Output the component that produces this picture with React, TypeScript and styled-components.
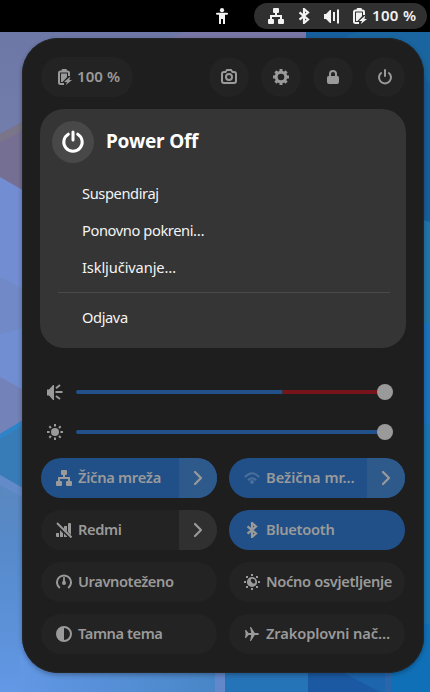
import React from 'react';
import styled, { createGlobalStyle } from 'styled-components';

const Global = createGlobalStyle`
  * { box-sizing: border-box; }
  html, body { margin: 0; padding: 0; background: #000; }
  body { font-family: "Noto Sans", sans-serif; font-size: 14.67px; overflow: hidden; }
  button { font: inherit; color: inherit; border: 0; margin: 0; padding: 0; background: none; }
`;

const Screen = styled.div`
  position: relative;
  width: 430px;
  height: 692px;
  overflow: hidden;
  display: flex;
  flex-direction: column;
`;

const Wallpaper = styled.svg`
  position: absolute;
  inset: 0;
`;

const TopBar = styled.header`
  position: relative;
  height: 32px;
  flex: none;
  background: #000;
  color: #f2f2f2;
  display: flex;
  align-items: center;
  justify-content: flex-end;
  gap: 24px;
  padding-right: 3px;
`;

const StatusPill = styled.div`
  width: 173px;
  height: 26px;
  border-radius: 13px;
  background: #303030;
  display: flex;
  align-items: center;
  padding-left: 14px;
  gap: 12px;
`;

const Battery = styled.span`
  display: flex;
  align-items: center;
  gap: 4px;
  font-weight: 600;
  font-size: 15px;
  white-space: nowrap;
`;

const Panel = styled.main`
  position: relative;
  width: 402px;
  height: 635px;
  margin: 6px 0 0 22px;
  padding: 19px;
  border-radius: 36px;
  background: #1e1e1e;
  box-shadow: 0 2px 5px rgba(0, 0, 0, 0.3), inset 0 0 0 1px #242526;
  color: #9a9a9a;
  display: flex;
  flex-direction: column;
`;

const Header = styled.div`
  display: flex;
  align-items: center;
  gap: 12px;
  height: 40px;
  width: 364px;
`;

const BatteryButton = styled.button`
  width: 92px;
  height: 40px;
  border-radius: 20px;
  background: #232323;
  display: flex;
  align-items: center;
  gap: 4px;
  padding-left: 16px;
  margin-right: auto;
  font-weight: 600;
  font-size: 15px;
  white-space: nowrap;
`;

const RoundButton = styled.button`
  width: 40px;
  height: 40px;
  border-radius: 50%;
  background: #232323;
  display: grid;
  place-items: center;
`;

const Card = styled.section`
  width: 366px;
  height: 239px;
  margin: 12px -1px 0;
  border-radius: 24px;
  background: #353535;
  color: #f4f4f4;
  padding: 12px;
  flex: none;
`;

const CardTitle = styled.div`
  display: flex;
  align-items: center;
  gap: 12px;
  height: 42px;
  margin-bottom: 12px;
  font-size: 19px;
  font-weight: 700;
  color: #fff;
`;

const PowerBadge = styled.span`
  width: 42px;
  height: 42px;
  border-radius: 50%;
  background: #484848;
  display: grid;
  place-items: center;
`;

const Label = styled.span<{ $spacing?: number }>`
  letter-spacing: ${p => p.$spacing ?? 0}px;
  padding-bottom: 2px;
`;

const MenuItem = styled.button`
  display: flex;
  align-items: center;
  width: 100%;
  height: 37px;
  padding-left: 30px;
`;

const Separator = styled.div`
  height: 1px;
  margin: 6px 4px 6px 6px;
  background: #4b4b4b;
`;

const Sliders = styled.div`
  margin-top: 24px;
  display: flex;
  flex-direction: column;
`;

const SliderRow = styled.div`
  height: 40px;
  display: flex;
  align-items: center;
  padding-left: 6px;
  gap: 13px;
`;

const Track = styled.div<{ $over?: boolean }>`
  width: 317px;
  height: 4px;
  border-radius: 2px;
  background: ${p => p.$over
    ? 'linear-gradient(to right, #21508a 206px, #333 206px, #333 207px, #75141b 207px)'
    : '#21508a'};
  display: flex;
  align-items: center;
  justify-content: flex-end;
`;

const Knob = styled.span`
  width: 16px;
  height: 16px;
  flex: none;
  border-radius: 50%;
  background: #9a9a9a;
`;

const Tiles = styled.div`
  margin-top: 6px;
  display: grid;
  grid-template-columns: 176px 176px;
  grid-auto-rows: 40px;
  gap: 12px;
`;

const Tile = styled.div<{ $active?: boolean }>`
  border-radius: 20px;
  overflow: hidden;
  display: flex;
  background: ${p => (p.$active ? '#215088' : '#232323')};
`;

const TileMain = styled.button`
  flex: 1;
  min-width: 0;
  display: flex;
  align-items: center;
  gap: 6px;
  padding-left: 15px;
  font-weight: 600;
  white-space: nowrap;
`;

const TileArrow = styled.button<{ $active?: boolean }>`
  width: 38px;
  display: grid;
  place-items: center;
  background: ${p => (p.$active ? '#2e598b' : '#303030')};
`;

const Glyph = styled.svg`
  width: 16px;
  height: 16px;
  flex: none;
  display: block;
  fill: currentColor;
`;

const Stroke = styled(Glyph)`
  fill: none;
  stroke: currentColor;
  stroke-width: 2;
`;

const Accessibility = () => (
  <Glyph viewBox="0 0 16 16">
    <circle cx="8" cy="2.2" r="2.1" />
    <path d="M3 4.8h10a1 1 0 0 1 0 2h-2V16H9v-5H7v5H5V6.8H3a1 1 0 0 1 0-2z" />
  </Glyph>
);

const Wired = () => (
  <Glyph viewBox="0 0 16 16">
    <path d="M6 0h4q1 0 1 1v3q0 1-1 1H9v2h5v4h1q1 0 1 1v3q0 1-1 1h-4q-1 0-1-1v-3q0-1 1-1h1V9H4v2h1q1 0 1 1v3q0 1-1 1H1q-1 0-1-1v-3q0-1 1-1h1V7h5V5H6q-1 0-1-1V1q0-1 1-1z" />
  </Glyph>
);

const Bluetooth = () => (
  <Stroke viewBox="0 0 16 16">
    <path d="M3.5 4.3l8.5 7.2L8 15V1l4 3.5-8.5 7.2" strokeWidth="2.2" />
  </Stroke>
);

const BatteryCharging = () => (
  <Glyph viewBox="0 0 16 16">
    <path d="M7 15H3.5Q2 15 2 13.5V4q0-1.5 1.5-1.5h7Q12 2.5 12 4v3" fill="none" stroke="currentColor" strokeWidth="2" />
    <path d="M5.500 0h3.500q.8 0 .8.8V2.500H4.700V.8q0-.8.8-.8zM4 4.500h6v3.700L5.500 13H4zM13.300 7.600L7 13h3L8.800 16l6.200-5h-2.600z" />
  </Glyph>
);

const VolumeTop = () => (
  <Glyph viewBox="0 0 16 16">
    <path d="M0 6h2l4-4h1v13H6l-4-4H0z" />
    <rect x="9" y="4" width="2" height="9" />
    <rect x="13" y="1.5" width="2" height="14" />
  </Glyph>
);

const Volume = () => (
  <Glyph viewBox="0 0 16 16">
    <path d="M0 5.5h2L6 1h1v15H6l-4-4.5H0z" />
    <path d="M9 4.3L13 1M8.500 8h7M9 12l4 3" fill="none" stroke="currentColor" strokeWidth="2" />
  </Glyph>
);

const Brightness = () => (
  <Glyph viewBox="0 0 16 16">
    <circle cx="8" cy="8" r="4" />
    <path d="M8 0v2.6M8 13.4V16M0 8h2.6M13.4 8H16M2.3 2.3L4 4M12 12l1.7 1.7M2.3 13.7L4 12M12 4l1.7-1.7" fill="none" stroke="currentColor" strokeWidth="2" />
  </Glyph>
);

const Camera = () => (
  <Stroke viewBox="0 0 16 16">
    <path d="M3 3h1.5L6 1h4l1.5 2H13q2 0 2 2v7q0 2-2 2H3q-2 0-2-2V5q0-2 2-2z" />
    <circle cx="8" cy="8" r="3" />
  </Stroke>
);

const Gear = () => (
  <Glyph viewBox="0 0 16 16">
    <circle cx="8" cy="8" r="4.8" fill="none" stroke="currentColor" strokeWidth="3" />
    <path d="M8 0v3M8 13v3M0 8h3M13 8h3M2.4 2.4l2 2M11.6 11.6l2 2M2.4 13.6l2-2M11.6 4.4l2-2" fill="none" stroke="currentColor" strokeWidth="3" />
  </Glyph>
);

const Lock = () => (
  <Glyph viewBox="0 0 16 16">
    <path d="M5 8V5a3 3 0 0 1 6 0v3" fill="none" stroke="currentColor" strokeWidth="2" />
    <path d="M3.5 7h9q1.5 0 1.5 1.5V13q0 2-2 2H4q-2 0-2-2V8.5Q2 7 3.5 7z" />
  </Glyph>
);

const Power = () => (
  <Stroke viewBox="0 0 16 16">
    <path d="M4.7 3.5a6 6 0 1 0 6.6 0" />
    <path d="M8 1v6" strokeLinecap="round" />
  </Stroke>
);

const BigPower = styled(Stroke)`
  width: 24px;
  height: 24px;
`;

const Cellular = () => (
  <Glyph viewBox="0 0 16 16">
    <path d="M0 11.5q0-.5.5-.5H3v4H1q-1 0-1-1zM4 8l3 3.2V15H4zM8 4.5l.5-.5H11v5.5L8 6.4zM8 11.5l3 3v.5H8zM12 2q0-1 1-1h1q1 0 1 1v11l-3-3z" />
    <path d="M1 1l14.5 14.5" stroke="currentColor" strokeWidth="2" />
  </Glyph>
);

const Wifi = () => (
  <Glyph viewBox="0 0 16 16" color="#496f9b">
    <path d="M.8 7.2Q8-.8 15.2 7.2M4 10.2q4-4 8 0" fill="none" stroke="currentColor" strokeWidth="2" />
    <circle cx="8" cy="12" r="2" />
  </Glyph>
);

const Gauge = () => (
  <Stroke viewBox="0 0 16 16">
    <path d="M3.8 14A7 7 0 1 1 12.200 14" />
    <path d="M8 3l.8 6H7.2z" fill="currentColor" strokeWidth="1" />
    <circle cx="8" cy="9" r="2" fill="currentColor" stroke="none" />
  </Stroke>
);

const Contrast = () => (
  <Glyph viewBox="0 0 16 16">
    <circle cx="8" cy="8" r="7" fill="none" stroke="currentColor" strokeWidth="2" />
    <path d="M8 1a7 7 0 0 0 0 14z" />
  </Glyph>
);

const NightLight = () => (
  <Glyph viewBox="0 0 16 16">
    <circle cx="8" cy="8" r="4.2" fill="none" stroke="currentColor" strokeWidth="1.8" />
    <path d="M8 4A2.800 2.800 0 0 0 12 8.500 4 4 0 1 1 8 4z" />
    <path d="M7 0h2v2H7zM7 14h2v2H7zM0 7h2v2H0zM14 7h2v2h-2zM2 2h2v2H2zM12 2h2v2h-2zM2 12h2v2H2zM12 12h2v2h-2z" />
  </Glyph>
);

const Airplane = () => (
  <Glyph viewBox="0 0 16 16">
    <path d="M1 4h1l2.6 3H7.200L6 1h1l3.800 6H14l1.200 1L14 9h-3.200L7 15H6l1.200-6H4.600L2 12H1l.6-4z" />
  </Glyph>
);

const Chevron = () => (
  <Stroke viewBox="0 0 16 16">
    <path d="M5 2l6 6-6 6" strokeWidth="2.2" strokeLinecap="round" strokeLinejoin="round" />
  </Stroke>
);

const menu = [
  { label: 'Suspendiraj', spacing: -0.4 },
  { label: 'Ponovno pokreni…', spacing: -0.4 },
  { label: 'Isključivanje…', spacing: -0.12 },
];

const tiles = [
  { label: 'Žična mreža', icon: Wired, active: true, arrow: true, spacing: -0.27 },
  { label: 'Bežična mr…', icon: Wifi, active: true, arrow: true, spacing: 0 },
  { label: 'Redmi', icon: Cellular, arrow: true, spacing: -0.4 },
  { label: 'Bluetooth', icon: Bluetooth, active: true, spacing: -0.28 },
  { label: 'Uravnoteženo', icon: Gauge, spacing: -0.4 },
  { label: 'Noćno osvjetljenje', icon: NightLight, spacing: -0.34 },
  { label: 'Tamna tema', icon: Contrast, spacing: -0.42 },
  { label: 'Zrakoplovni nač…', icon: Airplane, spacing: -0.1 },
];

const Backdrop = () => (
  <Wallpaper width="430" height="692" viewBox="0 0 430 692">
    <defs>
      <linearGradient id="sky" x1="0" y1="0" x2="0" y2="1">
        <stop offset="0" stopColor="#6b76a5" />
        <stop offset="1" stopColor="#7680ae" />
      </linearGradient>
      <linearGradient id="floor" x1="0" y1="0" x2="0" y2="1">
        <stop offset="0" stopColor="#5b87bd" />
        <stop offset=".35" stopColor="#568acb" />
        <stop offset="1" stopColor="#6298e5" />
      </linearGradient>
      <linearGradient id="bottom" x1="0" y1="0" x2="1" y2="0">
        <stop offset="0" stopColor="#6297e4" />
        <stop offset="1" stopColor="#4886c7" />
      </linearGradient>
      <linearGradient id="brown" x1="0" y1="0" x2=".2" y2="1">
        <stop offset="0" stopColor="#7c7688" />
        <stop offset="1" stopColor="#756f99" />
      </linearGradient>
    </defs>
    <rect width="306" height="190" fill="url(#sky)" />
    <path d="M170 38l14-6h122v10z" fill="#7877a5" />
    <path d="M0 134L40 113V692H0z" fill="url(#brown)" />
    <path d="M0 134L40 113V200L0 178z" fill="#766f94" />
    <path d="M0 134L40 113V122L0 142z" fill="#7a7588" />
    <path d="M0 177L40 200V692H0z" fill="#738dd3" />
    <path d="M0 277L40 298V692H0z" fill="#7189c6" />
    <path d="M0 334L40 324V692H0z" fill="#718ed2" />
    <path d="M0 377L40 399V692H0z" fill="#7382b9" />
    <path d="M0 434L40 410V692H0z" fill="#387cb7" />
    <path d="M0 434L40 410V415L0 439z" fill="#2e84c8" />
    <path d="M0 475L40 498V692H0z" fill="url(#floor)" />
    <path d="M0 475L40 498V507L0 485z" fill="#638bc9" />
    <rect x="306" y="32" width="124" height="660" fill="#175f9c" />
    <path d="M345 38q6-5 16-6h69v50z" fill="#1a659f" />
    <path d="M400 213l30 9v470h-30z" fill="#2076ab" />
    <path d="M400 315l30 9v368h-30z" fill="#1c73bf" />
    <path d="M400 416l30 9v267h-30z" fill="#1974b2" />
    <path d="M380 612l50 13v67h-50z" fill="#1070b7" />
    <rect x="20" y="640" width="196" height="52" fill="url(#bottom)" />
    <rect x="215" y="640" width="10" height="52" fill="#6288ca" />
    <rect x="225" y="640" width="83" height="52" fill="#2674b8" />
    <rect x="308" y="640" width="82" height="52" fill="#1b5aa3" />
    <path d="M338 670h52v22h-10z" fill="#1d65ad" />
    <rect x="385" y="672" width="6" height="20" fill="#2c66aa" />
  </Wallpaper>
);

export default function App() {
  return (
    <Screen>
      <Global />
      <Backdrop />
      <TopBar>
        <Accessibility />
        <StatusPill>
          <Wired /><Bluetooth /><VolumeTop />
          <Battery><BatteryCharging /><Label $spacing={0.35}>100 %</Label></Battery>
        </StatusPill>
      </TopBar>
      <Panel>
        <Header>
          <BatteryButton><BatteryCharging /><Label $spacing={0.1}>100 %</Label></BatteryButton>
          <RoundButton><Camera /></RoundButton>
          <RoundButton><Gear /></RoundButton>
          <RoundButton><Lock /></RoundButton>
          <RoundButton><Power /></RoundButton>
        </Header>
        <Card>
          <CardTitle>
            <PowerBadge>
              <BigPower viewBox="0 0 24 24">
                <path d="M7.3 4.2a9.2 9.2 0 1 0 9.4 0" strokeWidth="3" strokeLinecap="round" />
                <path d="M12 2v8" strokeWidth="3" strokeLinecap="round" />
              </BigPower>
            </PowerBadge>
            <Label $spacing={-0.2}>Power Off</Label>
          </CardTitle>
          {menu.map(({ label, spacing }) => (
            <MenuItem key={label}><Label $spacing={spacing}>{label}</Label></MenuItem>
          ))}
          <Separator />
          <MenuItem><Label $spacing={-0.4}>Odjava</Label></MenuItem>
        </Card>
        <Sliders>
          <SliderRow><Volume /><Track $over><Knob /></Track></SliderRow>
          <SliderRow><Brightness /><Track><Knob /></Track></SliderRow>
        </Sliders>
        <Tiles>
          {tiles.map(({ label, icon: Icon, active, arrow, spacing }) => (
            <Tile key={label} $active={active}>
              <TileMain><Icon /><Label $spacing={spacing}>{label}</Label></TileMain>
              {arrow && <TileArrow $active={active}><Chevron /></TileArrow>}
            </Tile>
          ))}
        </Tiles>
      </Panel>
    </Screen>
  );
}
